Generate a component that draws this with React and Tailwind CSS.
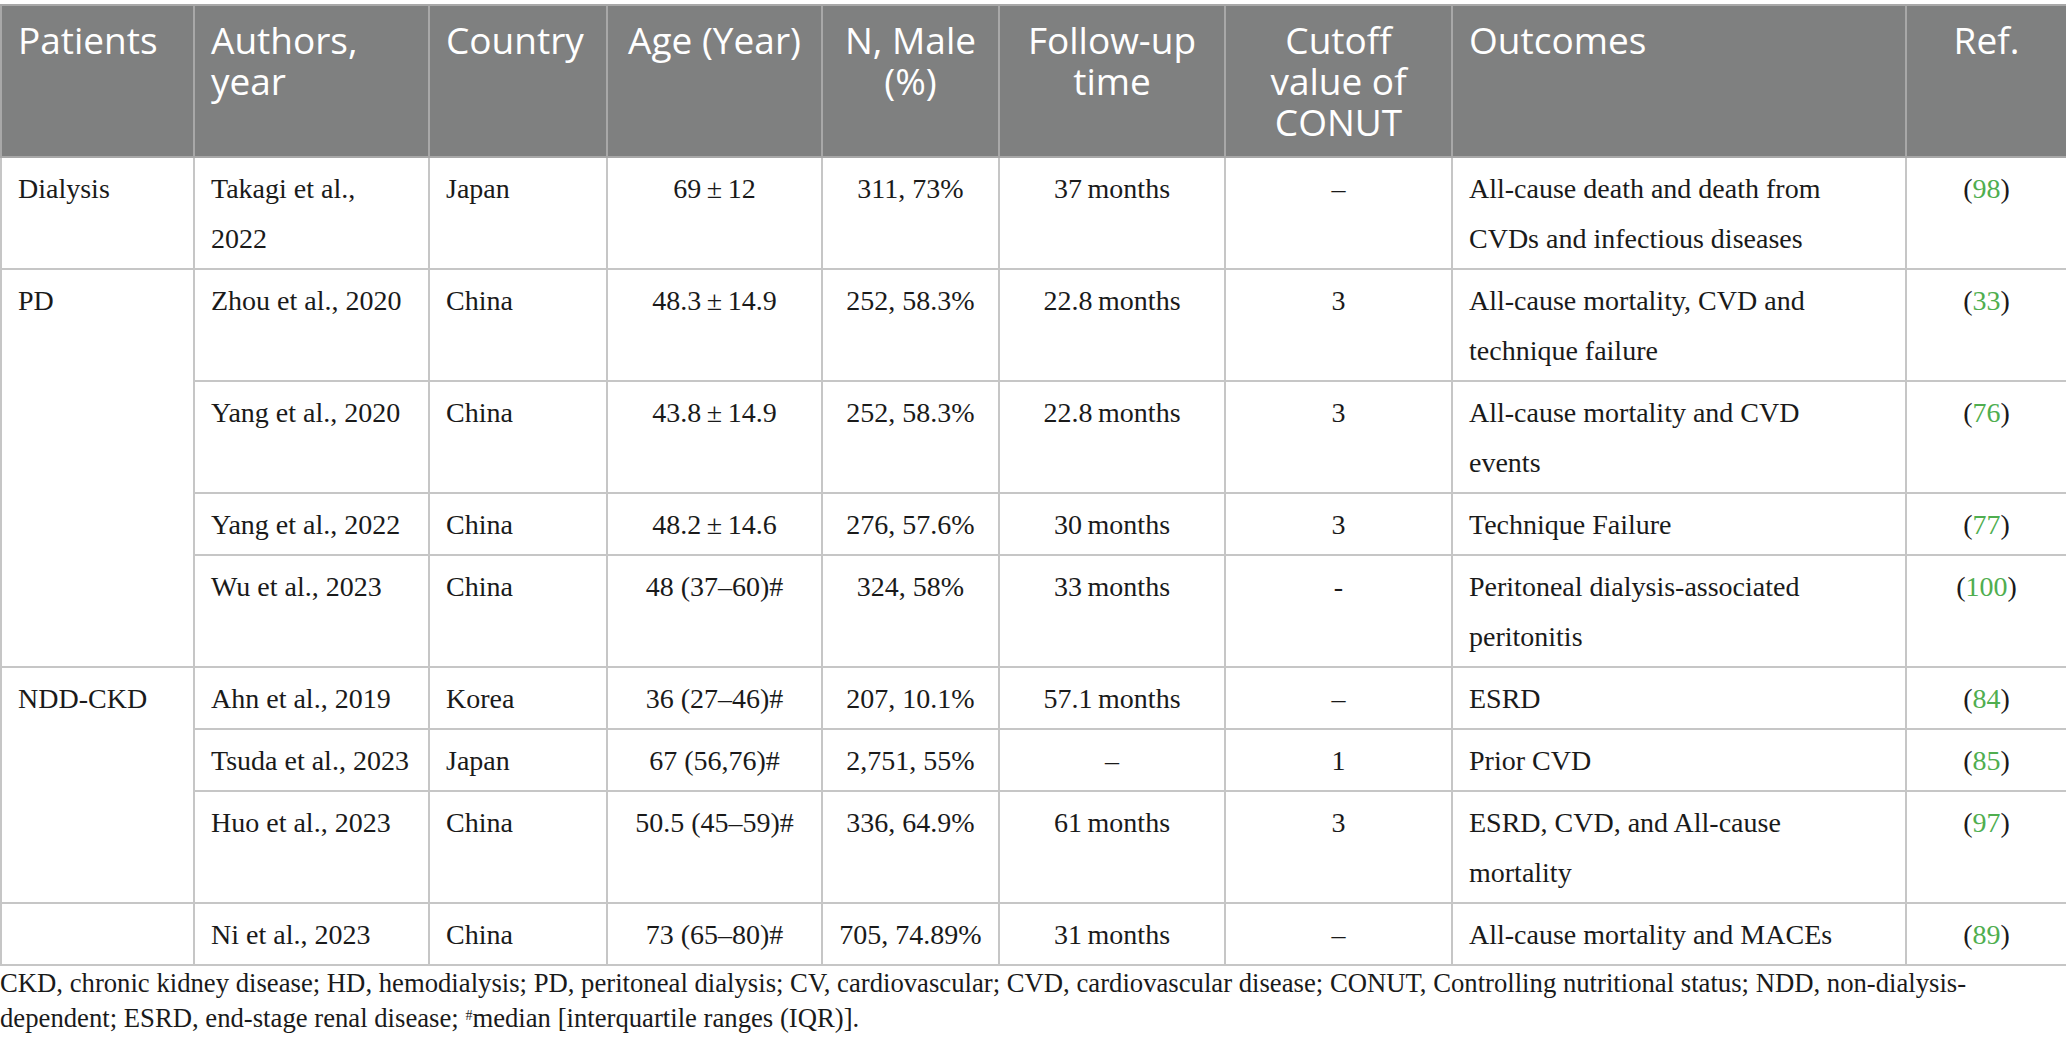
import React from 'react';

const cols = ['w-[193px]', 'w-[235px]', 'w-[178px]', 'w-[215px]', 'w-[177px]', 'w-[226px]', 'w-[227px]', 'w-[454px]', 'w-[161px]'];

const head = [
    { lines: ['Patients'], align: 'text-left' },
    { lines: ['Authors,', 'year'], align: 'text-left' },
    { lines: ['Country'], align: 'text-left' },
    { lines: ['Age (Year)'], align: 'text-center' },
    { lines: ['N, Male', '(%)'], align: 'text-center' },
    { lines: ['Follow-up', 'time'], align: 'text-center' },
    { lines: ['Cutoff', 'value of', 'CONUT'], align: 'text-center' },
    { lines: ['Outcomes'], align: 'text-left' },
    { lines: ['Ref.'], align: 'text-center' },
];

const rows = [
    { p: 'Dialysis', span: 1, a: ['Takagi et al.,', '2022'], c: 'Japan', age: '69\u2009±\u200912', n: '311, 73%', f: '37\u2009months', cut: '–', o: ['All-cause death and death from', 'CVDs and infectious diseases'], ref: '98' },
    { p: 'PD', span: 4, a: ['Zhou et al., 2020'], c: 'China', age: '48.3\u2009±\u200914.9', n: '252, 58.3%', f: '22.8\u2009months', cut: '3', o: ['All-cause mortality, CVD and', 'technique failure'], ref: '33' },
    { a: ['Yang et al., 2020'], c: 'China', age: '43.8\u2009±\u200914.9', n: '252, 58.3%', f: '22.8\u2009months', cut: '3', o: ['All-cause mortality and CVD', 'events'], ref: '76' },
    { a: ['Yang et al., 2022'], c: 'China', age: '48.2\u2009±\u200914.6', n: '276, 57.6%', f: '30\u2009months', cut: '3', o: ['Technique Failure'], ref: '77' },
    { a: ['Wu et al., 2023'], c: 'China', age: '48 (37–60)#', n: '324, 58%', f: '33\u2009months', cut: '-', o: ['Peritoneal dialysis-associated', 'peritonitis'], ref: '100' },
    { p: 'NDD-CKD', span: 3, a: ['Ahn et al., 2019'], c: 'Korea', age: '36 (27–46)#', n: '207, 10.1%', f: '57.1\u2009months', cut: '–', o: ['ESRD'], ref: '84' },
    { a: ['Tsuda et al., 2023'], c: 'Japan', age: '67 (56,76)#', n: '2,751, 55%', f: '–', cut: '1', o: ['Prior CVD'], ref: '85' },
    { a: ['Huo et al., 2023'], c: 'China', age: '50.5 (45–59)#', n: '336, 64.9%', f: '61\u2009months', cut: '3', o: ['ESRD, CVD, and All-cause', 'mortality'], ref: '97' },
    { p: '', span: 1, a: ['Ni et al., 2023'], c: 'China', age: '73 (65–80)#', n: '705, 74.89%', f: '31\u2009months', cut: '–', o: ['All-cause mortality and MACEs'], ref: '89' },
];

const td = 'border-2 border-[#c6c6c6] align-top px-[16px] pt-[6px] pb-[4px] whitespace-nowrap';

function Lines({ lines }) {
    return lines.map((l, i) => <div key={i}>{l}</div>);
}

export default function App() {
    return (
        <div className="w-[2066px] bg-white pt-[4px] text-[#1a1a1a]">
            <table className="w-[2066px] table-fixed border-collapse">
                <colgroup>
                    {cols.map((w, i) => <col key={i} className={w} />)}
                </colgroup>
                <thead>
                    <tr className="bg-[#7f8080] text-white" style={{ fontFamily: '"Open Sans", sans-serif' }}>
                        {head.map((h, i) => (
                            <th
                                key={i}
                                className={`border-2 border-[#a8a8a8] align-top px-[16px] pt-[13px] pb-[14px] text-[37px] leading-[41px] font-normal whitespace-nowrap ${h.align}`}
                            >
                                <Lines lines={h.lines} />
                            </th>
                        ))}
                    </tr>
                </thead>
                <tbody className="text-[28px] leading-[50px]" style={{ fontFamily: '"Liberation Serif", serif' }}>
                    {rows.map((r, i) => (
                        <tr key={i}>
                            {r.p !== undefined && (
                                <td rowSpan={r.span} className={`${td} text-left`}>{r.p}</td>
                            )}
                            <td className={`${td} text-left`}><Lines lines={r.a} /></td>
                            <td className={`${td} text-left`}>{r.c}</td>
                            <td className={`${td} text-center`}>{r.age}</td>
                            <td className={`${td} text-center`}>{r.n}</td>
                            <td className={`${td} text-center`}>{r.f}</td>
                            <td className={`${td} text-center`}>{r.cut}</td>
                            <td className={`${td} text-left`}><Lines lines={r.o} /></td>
                            <td className={`${td} text-center`}>
                                (<span className="text-[#4fae4f]">{r.ref}</span>)
                            </td>
                        </tr>
                    ))}
                </tbody>
            </table>

            {/* Footnote */}
            <div className="text-[26.7px] leading-[35px] text-[#1a1a1a]" style={{ fontFamily: '"Liberation Serif", serif' }}>
                <div className="whitespace-nowrap">
                    CKD, chronic kidney disease; HD, hemodialysis; PD, peritoneal dialysis; CV, cardiovascular; CVD, cardiovascular disease; CONUT, Controlling nutritional status; NDD, non-dialysis-
                </div>
                <div className="whitespace-nowrap">
                    dependent; ESRD, end-stage renal disease; <sup className="text-[14px]">#</sup>median [interquartile ranges (IQR)].
                </div>
            </div>
        </div>
    );
}
